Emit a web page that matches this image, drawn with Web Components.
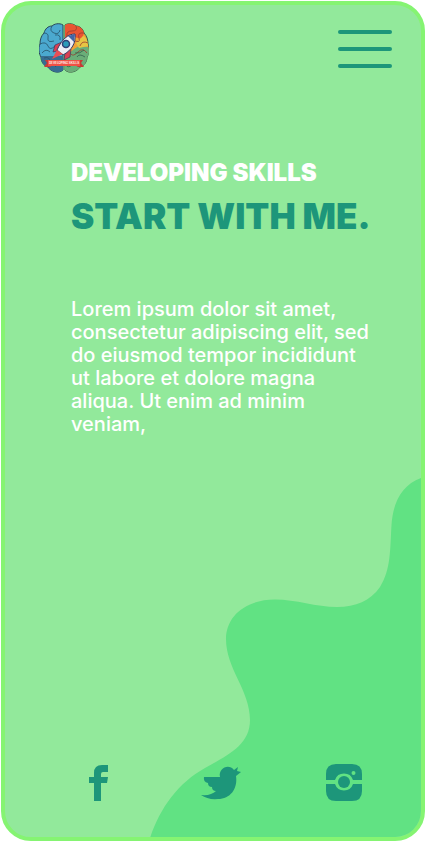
<!DOCTYPE html>
<html lang="en">
<head>
<meta charset="utf-8">
<meta name="viewport" content="width=device-width, initial-scale=1">
<title>Start with me</title>
<style>
*{box-sizing:border-box}
body{margin:0;min-height:100vh;padding:1px 0 1px 1px;background:#fff;display:flex;font-family:Inter,"Open Sans",sans-serif;--brand:#1d967a}
</style>
</head>
<body>
<landing-card>
  <site-header slot="header"></site-header>
  <hero-copy>
    <span slot="eyebrow">DEVELOPING SKILLS</span>
    <span slot="title">START WITH ME.</span>
    Lorem ipsum dolor sit amet, consectetur adipiscing elit, sed do eiusmod tempor incididunt ut labore et dolore magna aliqua. Ut enim ad minim veniam,
  </hero-copy>
  <social-links slot="footer"></social-links>
</landing-card>
<script>
const define = (name, html) => customElements.define(name, class extends HTMLElement {
  constructor() {
    super();
    const t = document.createElement('template');
    t.innerHTML = html;
    this.attachShadow({mode: 'open'}).append(t.content.cloneNode(true));
  }
});

define('wave-shape', `
<style>:host{display:block;pointer-events:none}svg{display:block;width:100%}</style>
<svg viewBox="149 477 272 360" aria-hidden="true"><path fill="#61e283" d="M421 478C402 485 393 502 391.500 525C390 550 391 569 380 587C370 601 356 607 337 607C316 607 296 599.500 275 599.500C246 599.500 226 616 226 639C226 669 250 690 250 720C250 745 228 755 205 768C178 783 160 808 150 838H421Z"/></svg>`);

define('landing-card', `
<style>
:host{display:flex;flex:1;flex-direction:column;position:relative;overflow:hidden;box-sizing:border-box;border:4px solid #85f472;border-radius:30px;background:#92e99b}
wave-shape{position:absolute;right:0;bottom:0;width:272px}
header,main,footer{z-index:1}
main{flex:1}
</style>
<wave-shape></wave-shape>
<header><slot name="header"></slot></header><main><slot></slot></main><footer><slot name="footer"></slot></footer>`);

define('brain-logo', `
<style>:host{display:block;width:50px;height:50px}svg{display:block;width:100%;height:100%}</style>
<svg viewBox="0 0 50 50" role="img" aria-label="Rocket over a brain">
<path d="M24 2C20-.5 15 1 13 3C9 3 6 6 5 10C2 13 1 17 1 21C-1 25 0 31 2 34C2 39 5 43 9 44C12 49 20 51 24 47Z" fill="#4ba9cf" stroke="#27475b"/>
<path d="M2 33C2 39 5 43 9 44C12 49 20 51 24 47V33Z" fill="#376d91"/>
<path d="M26 2C30-.5 35 1 37 3C41 3 44 6 45 10C48 13 49 17 49 21C51 25 50 31 48 34C48 39 45 43 41 44C38 49 30 51 26 47Z" fill="#f1a136" stroke="#355b49"/>
<path d="M26 2C30-.5 35 1 37 3C41 3 44 6 45 10L43 16L35 14L26 20Z" fill="#e95432"/>
<path d="M35 26L40 23L49 24C51 28 50 32 48 34C48 39 45 43 41 44C38 49 30 51 26 47V34Z" fill="#6aae78"/>
<path d="M44 13C47 14 49 18 49 23L40 25L37 20Z" fill="#e6c544"/>
<g fill="none" stroke="#27546b" stroke-width=".8"><path d="M13 3Q10 8 15 10T21 7M5 10Q10 10 9 15T15 18M1 21Q7 18 9 23T16 23M3 30Q7 25 11 29M16 12Q22 11 21 17M5 35Q11 33 11 39T20 41M9 44Q13 38 17 44"/></g>
<g fill="none" stroke="#993e2e" stroke-width=".8"><path d="M37 3Q39 8 33 8T28 13M45 10Q38 9 40 15T34 17M49 20Q43 17 41 23M48 30Q44 24 39 29T32 31"/></g>
<g fill="none" stroke="#30614d" stroke-width=".8"><path d="M46 34Q40 30 38 34M42 43Q39 36 34 41T27 42M45 27Q41 31 36 30"/></g>
<path d="M23 19L16 22L14 29L21 27M32 26L31 34L25 37L26 30" fill="#db4054" stroke="#3b395c" stroke-width=".7"/>
<path d="M36 11C29 11 23 16 18 27L24 32C33 27 37 20 36 11Z" fill="#eeedf5" stroke="#373b66"/>
<path d="M36 11L29 13L35 19Z" fill="#4266a4"/>
<circle cx="27" cy="21" r="3.500" fill="#2c9ab8" stroke="#304076" stroke-width="1.500"/>
<path d="M18 27L13 36L24 31Z" fill="#e94e54"/>
<path d="M5 44L8 40L6 37H44L42 40L45 44H39L36 42H14L11 44Z" fill="#c93a35"/>
<path d="M9 37H41V43H9Z" fill="#ef5145"/>
<text x="25" y="41" text-anchor="middle" font-family="Inter,sans-serif" font-size="3" font-weight="600" fill="#fff">DEVELOPING SKILLS</text>
</svg>`);

define('site-header', `
<style>
:host{display:flex;justify-content:space-between;align-items:flex-start;padding:18px 29px 0 34px}
a{display:block}
button{all:unset;box-sizing:border-box;display:flex;flex-direction:column;gap:13px;width:54px;padding-top:7px;cursor:pointer}
i{height:4px;border-radius:2px;background:var(--brand)}
</style>
<a href="#" aria-label="Home"><brain-logo></brain-logo></a>
<button type="button" aria-label="Open menu"><i></i><i></i><i></i></button>`);

define('hero-copy', `
<style>
:host{display:block;padding:88px 46px 24px 66px;color:#fff}
h2,h1,p{margin:0}
h2{font-size:24px;line-height:24px;font-weight:900}
h1{font-size:35px;line-height:40px;font-weight:900;color:var(--brand);margin-top:11px;white-space:nowrap}
p{margin-top:62px;font-size:20px;line-height:23px;font-weight:500}
</style>
<h2><slot name="eyebrow"></slot></h2><h1><slot name="title"></slot></h1><p><slot></slot></p>`);

define('social-links', `
<style>
:host{display:flex;justify-content:space-between;padding:0 57px 35px 73px}
a{display:block;color:var(--brand)}
svg{display:block;width:40px;height:40px;fill:currentColor}
</style>
<a href="#" aria-label="Facebook"><svg viewBox="0 0 40 40"><path d="M16 39V21H11V15H16V11Q16 3 24 3H30V10H25Q23 10 23 12V15H30L29 21H23V39Z"/></svg></a>
<a href="#" aria-label="Twitter"><svg viewBox="0 0 40 40"><path d="M0 33Q10 34 15 29Q11 29 11 25Q7 25 7 21Q2 20 3 15H19C17 6 28 1 33 8L37 5L36 9L40 10L35 14C37 27 29 37 17 37Q7 38 0 33Z"/></svg></a>
<a href="#" aria-label="Instagram"><svg viewBox="0 0 40 40"><path fill-rule="evenodd" d="M2 18V12Q2 2 12 2H28Q38 2 38 12V18H29A9.500 9.500 0 0 0 11 18ZM31.500 11A2 2 0 1 0 27.500 11A2 2 0 1 0 31.500 11ZM2 22H11A9.500 9.500 0 0 0 29 22H38V29Q38 39 28 39H12Q2 39 2 29Z"/><circle cx="20" cy="20" r="6"/></svg></a>`);
</script>
</body>
</html>
